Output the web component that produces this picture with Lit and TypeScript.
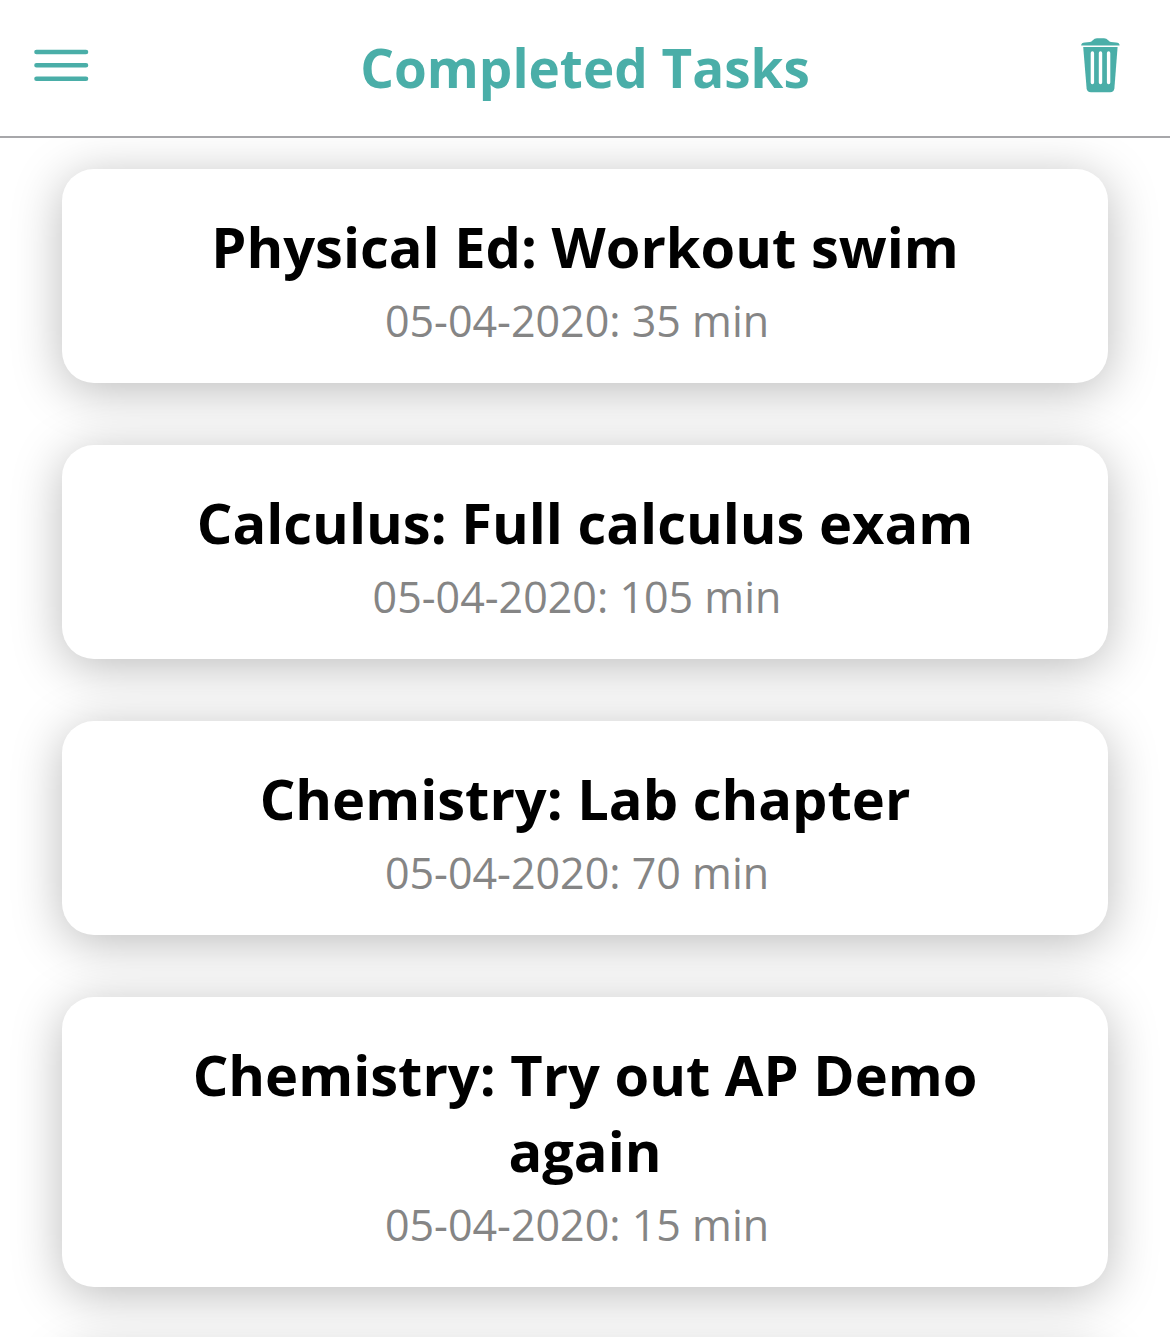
import { LitElement, html, css } from "lit";
import { customElement, property } from "lit/decorators.js";

interface Task { subject: string; title: string; date: string; minutes: number; }

const TASKS: Task[] = [
  { subject: "Physical Ed", title: "Workout swim", date: "05-04-2020", minutes: 35 },
  { subject: "Calculus", title: "Full calculus exam", date: "05-04-2020", minutes: 105 },
  { subject: "Chemistry", title: "Lab chapter", date: "05-04-2020", minutes: 70 },
  { subject: "Chemistry", title: "Try out AP Demo again", date: "05-04-2020", minutes: 15 },
];

@customElement("task-card")
export class TaskCard extends LitElement {
  @property({ attribute: false }) task?: Task;

  static styles = css`
    :host { display: block; }
    .card {
      min-height: 142px;
      padding: 39px 112px 32px;
      border-radius: 32px;
      background: #fff;
      box-shadow: 0 8px 50px rgba(0, 0, 0, 0.27);
      text-align: center;
    }
    .title { margin: 0; font-size: 56px; line-height: 76px; font-weight: 700; color: #000; }
    .meta { margin: 0; padding: 7px 16px 0 0; font-size: 43px; line-height: 60px; color: #858585; }
  `;

  render() {
    const t = this.task;
    // Without a task the card is an empty placeholder.
    if (!t) return html`<div class="card"></div>`;
    return html`<article class="card">
      <h2 class="title">${t.subject}: ${t.title}</h2>
      <p class="meta">${t.date}: ${t.minutes} min</p>
    </article>`;
  }
}

@customElement("app-root")
export class AppRoot extends LitElement {
  static styles = css`
    :host {
      display: block;
      height: 100vh;
      overflow: hidden;
      background: #fff;
      font-family: "Open Sans", "Noto Sans", sans-serif;
    }
    .page { display: flex; flex-direction: column; height: 100%; }
    .bar {
      display: flex;
      align-items: center;
      justify-content: space-between;
      padding: 30px 32px;
      border-bottom: 2px solid #a7a7aa;
      color: #4aaea8;
    }
    .heading { margin: 0; font-size: 53px; line-height: 76px; font-weight: 700; }
    .icon-button {
      display: flex;
      align-items: center;
      justify-content: center;
      width: 58px;
      height: 58px;
      padding: 0;
      border: 0;
      background: none;
      color: inherit;
    }
    .list {
      display: flex;
      flex: 1;
      flex-direction: column;
      gap: 62px;
      min-height: 0;
      margin: 0;
      padding: 31px 62px;
      overflow: hidden;
      list-style: none;
    }
    .item { flex: none; }
  `;

  render() {
    return html`<div class="page">
      <header class="bar">
        <button class="icon-button" aria-label="Menu">
          <svg width="58" height="58" viewBox="0 1 58 58" fill="none" stroke="currentColor" stroke-width="4.6" stroke-linecap="round">
            <path d="M4.5 14H54M4.5 27.3H54M4.5 40.7H54" />
          </svg>
        </button>
        <h1 class="heading">Completed Tasks</h1>
        <button class="icon-button" aria-label="Delete completed tasks">
          <svg width="58" height="58" viewBox="0 0 58 58" fill="none" overflow="visible">
            <path fill="currentColor" d="M1.2 6.6Q1.2 3.4 5 3.4L10 3Q11.5 2.600 12.800 1.200Q14.500 -.8 17 -.8H24Q26.500 -.8 28.200 1.200Q29.500 2.600 31 3L36 3.400Q39.600 3.400 39.600 6.600Z" />
            <path fill="currentColor" d="M3.200 8H37.600L34.400 49.200Q34 53.200 30 53.200H11Q7 53.200 6.600 49.200Z" />
            <path stroke="#fff" stroke-width="3.400" stroke-linecap="round" d="M12.400 14V43.500M20.500 14V43.500M28.600 14V43.500" />
          </svg>
        </button>
      </header>
      <ul class="list">
        ${TASKS.map((t) => html`<li class="item"><task-card .task=${t}></task-card></li>`)}
        <li class="item" aria-hidden="true"><task-card></task-card></li>
      </ul>
    </div>`;
  }
}
